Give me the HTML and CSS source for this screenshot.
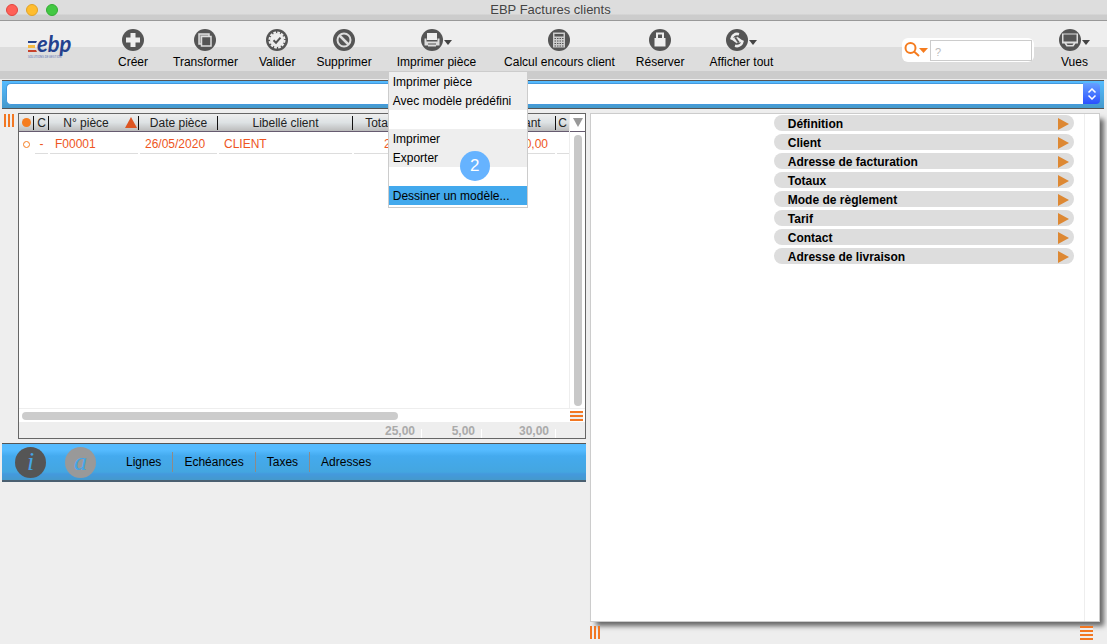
FILE: index.html
```html
<!DOCTYPE html>
<html lang="fr">
<head>
<meta charset="utf-8">
<title>EBP Factures clients</title>
<link rel="stylesheet" href="styles.css">
</head>
<body>
<header class="titlebar">
  <div class="lights"><span class="light red"></span><span class="light yellow"></span><span class="light green"></span></div>
  <h1 class="title">EBP Factures clients</h1>
</header>

<nav class="toolbar">
  <svg class="logo" width="48" height="26" viewBox="0 0 48 26" role="img" aria-label="ebp">
    <path d="M1 6h9l-1 2H1z" fill="#24418e"/>
    <path d="M1 10h7v3H1z" fill="#f5b942"/>
    <path d="M1 15h8l1 2H1z" fill="#c8412b"/>
    <text class="logo-name" x="10" y="17">ebp</text>
    <text class="logo-tag" x="1" y="23">SOLUTIONS DE GESTION</text>
  </svg>
  <div class="tools">
    <button class="tool"><span class="tool-icon"><svg width="22" height="22" viewBox="0 0 22 22"><circle cx="11" cy="11" r="11" fill="#555"/><path d="M8.500 4h5v4.500H18v5h-4.500V18h-5v-4.500H4v-5h4.500z" fill="#eee"/></svg></span>Créer</button>
    <button class="tool wide"><span class="tool-icon"><svg width="22" height="22" viewBox="0 0 22 22"><circle cx="11" cy="11" r="11" fill="#555"/><path d="M5 5h10v10H5z" fill="#999" stroke="#ddd" stroke-width="1.500"/><path d="M7.500 7.500h9.500v9.500H7.500z" fill="#555" stroke="#ddd" stroke-width="1.500"/></svg></span>Transformer</button>
    <button class="tool"><span class="tool-icon"><svg width="22" height="22" viewBox="0 0 22 22"><circle cx="11" cy="11" r="11" fill="#555"/><circle cx="11" cy="11" r="7" fill="#eee"/><circle cx="11" cy="11" r="7.500" fill="none" stroke="#eee" stroke-width="2" stroke-dasharray="2.700 1.230"/><path d="M7.500 11.300l2.500 2.400 4.500-5" fill="none" stroke="#555" stroke-width="2"/></svg></span>Valider</button>
    <button class="tool"><span class="tool-icon"><svg width="22" height="22" viewBox="0 0 22 22"><circle cx="11" cy="11" r="11" fill="#555"/><circle cx="11" cy="11" r="6.500" fill="none" stroke="#ddd" stroke-width="2"/><path d="M6.500 6.500l9 9" stroke="#ddd" stroke-width="2.500"/></svg></span>Supprimer</button>
    <div class="tool-with-menu">
      <button class="tool" aria-expanded="true"><span class="tool-icon"><svg width="22" height="22" viewBox="0 0 22 22"><circle cx="11" cy="11" r="11" fill="#555"/><path d="M6 4h10v7H6z" fill="#eee"/><path d="M3.500 9.500h2v3h11v-3h2v7h-3.500v-2H7v2H3.500z" fill="#ddd"/><path d="M7 15.500h8v2H7z" fill="#ddd"/></svg><span class="caret"></span></span>Imprimer pièce</button>
      <div class="menu" role="menu">
        <button class="menu-item" role="menuitem">Imprimer pièce</button>
        <button class="menu-item" role="menuitem">Avec modèle prédéfini</button>
        <div class="menu-gap"></div>
        <button class="menu-item" role="menuitem">Imprimer</button>
        <button class="menu-item" role="menuitem">Exporter</button>
        <div class="menu-gap"></div>
        <button class="menu-item selected" role="menuitem">Dessiner un modèle...</button>
        <span class="step">2</span>
      </div>
    </div>
    <button class="tool far"><span class="tool-icon"><svg width="22" height="22" viewBox="0 0 22 22"><circle cx="11" cy="11" r="11" fill="#555"/><path d="M5 3.500h12v15H5z" fill="#ccc"/><path d="M6.500 5h9v2.500h-9z" fill="#555"/><path d="M6.500 9.500h9M6.500 12h9M6.500 14.500h9M6.500 17h9" stroke="#555" stroke-width="1.200" stroke-dasharray="1.500 1"/></svg></span>Calcul encours client</button>
    <button class="tool"><span class="tool-icon"><svg width="22" height="22" viewBox="0 0 22 22"><circle cx="11" cy="11" r="11" fill="#555"/><path d="M5.500 9h11v8.500h-11z" fill="#eee"/><path d="M8 10V4.500h6V10" fill="none" stroke="#eee" stroke-width="2"/></svg></span>Réserver</button>
    <button class="tool wide"><span class="tool-icon"><svg width="22" height="22" viewBox="0 0 22 22"><circle cx="11" cy="11" r="11" fill="#555"/><path d="M13 5.200C9 4 5.500 6.500 5.700 10.500" fill="none" stroke="#eee" stroke-width="2.500"/><path d="M4 9.500l6.500-1.500.5 6.500z" fill="#eee"/><path d="M9 16.800c4 1.200 7.500-1.300 7.300-5.300" fill="none" stroke="#eee" stroke-width="2.500"/><path d="M18 12.500l-6.500 1.500-.5-6.500z" fill="#eee"/><path d="M9 8.500l4 5" stroke="#555" stroke-width="1.500"/></svg><span class="caret"></span></span>Afficher tout</button>
  </div>
  <div class="search">
    <svg width="24" height="16" viewBox="0 0 24 16"><circle cx="6.500" cy="6" r="5" fill="none" stroke="#f57c1f" stroke-width="2"/><path d="M10 9.500l5 4.500" stroke="#f57c1f" stroke-width="2"/><path d="M15 6h9l-4.500 5z" fill="#f57c1f"/></svg>
    <input class="search-input" type="text" placeholder="?" aria-label="Rechercher">
  </div>
  <button class="tool"><span class="tool-icon"><svg width="22" height="22" viewBox="0 0 22 22"><circle cx="11" cy="11" r="11" fill="#555"/><path d="M3 4.500h16v10h-2.500l-2 3h-7l-2-3H3z" fill="#ddd"/><path d="M4.500 5.500h13v7h-13z" fill="#555"/><path d="M7.500 14.500h7l-1 1.500h-5z" fill="#555"/></svg><span class="caret"></span></span>Vues</button>
</nav>

<div class="filterbar">
  <select class="filter" aria-label="Filtre"><option></option></select>
  <span class="stepper"><svg width="10" height="12" viewBox="0 0 10 12"><path d="M1.500 4.500L5 1l3.500 3.500M1.500 7.500L5 11l3.500-3.500" fill="none" stroke="#fff" stroke-width="1.500"/></svg></span>
</div>

<main class="content">
  <div class="left">
    <div class="list-row">
      <span class="bars"></span>
      <section class="list">
        <div class="list-body">
          <table class="grid">
            <colgroup><col class="c-dot"><col class="c-c"><col class="c-num"><col class="c-date"><col class="c-client"><col class="c-total"><col class="c-tax"><col class="c-amount"><col class="c-end"></colgroup>
            <thead><tr>
              <th><span class="dot"></span></th><th>C</th><th class="sorted">N° pièce<span class="sort"></span></th><th>Date pièce</th><th>Libellé client</th><th>Total HT</th><th>TVA</th><th>Montant</th><th>C</th>
            </tr></thead>
            <tbody><tr>
              <td class="mark"><span class="ring"></span></td><td class="dash"><div>-</div></td><td><div>F00001</div></td><td><div>26/05/2020</div></td><td><div>CLIENT</div></td><td class="num"><div>25,00</div></td><td class="num"><div>5,00</div></td><td class="num"><div>30,00</div></td><td><div>&nbsp;</div></td>
            </tr></tbody>
          </table>
          <div class="vscroll"><div class="vhead"><span class="down"></span></div><div class="vthumb"></div></div>
        </div>
        <div class="hscroll"><span class="hthumb"></span><span class="lines"></span></div>
        <div class="totals"><span class="sum first">25,00</span><span class="sum second">5,00</span><span class="sum third">30,00</span></div>
      </section>
    </div>
    <nav class="tabs">
      <button class="round" aria-label="Informations">i</button>
      <button class="round light-round" aria-label="Annotations">a</button>
      <div class="tab-list"><button class="tab">Lignes</button><button class="tab">Echéances</button><button class="tab">Taxes</button><button class="tab">Adresses</button></div>
    </nav>
  </div>
  <div class="right">
    <section class="panel">
      <div class="sections">
        <button class="section">Définition<span class="play"></span></button>
        <button class="section">Client<span class="play"></span></button>
        <button class="section">Adresse de facturation<span class="play"></span></button>
        <button class="section">Totaux<span class="play"></span></button>
        <button class="section">Mode de règlement<span class="play"></span></button>
        <button class="section">Tarif<span class="play"></span></button>
        <button class="section">Contact<span class="play"></span></button>
        <button class="section">Adresse de livraison<span class="play"></span></button>
      </div>
    </section>
    <footer class="foot"><span class="bars"></span><span class="lines"></span></footer>
  </div>
</main>
</body>
</html>
```
FILE: styles.css
```css
* { box-sizing: border-box; }
body { margin: 0; min-height: 100vh; display: flex; flex-direction: column; background: #eee; color: #000; font: 12px/14px "Liberation Sans", Arial, sans-serif; }
button { border: 0; padding: 0; margin: 0; background: none; font: inherit; color: inherit; }

.titlebar { position: relative; height: 21px; display: flex; align-items: center; justify-content: center; background: linear-gradient(#ddd 14px, #ccc 15px); border-bottom: 1px solid #999; }
.lights { position: absolute; left: 6px; top: 4px; display: flex; gap: 8px; }
.light { width: 12px; height: 12px; border-radius: 50%; border: 1px solid; }
.red { background: #ff6057; border-color: #e2463f; }
.yellow { background: #ffbd2e; border-color: #e1a325; }
.green { background: #43c843; border-color: #34ad34; }
.title { margin: 0; padding-right: 6px; font: 13px/20px "Liberation Sans", sans-serif; color: #444; }

.toolbar { height: 58px; display: flex; align-items: flex-start; padding: 8px 17px 0 27px; background: linear-gradient(#eee 26px, #ddd 26px, #ddd 50px, #ccc 50px); }
.logo { margin: 6px 43px 0 0; flex: none; overflow: visible; }
.logo-name { font: italic bold 22px Lato, sans-serif; fill: #24418e; }
.logo-tag { font: 3px Roboto, sans-serif; fill: #5d76b5; }
.tools { display: flex; gap: 21px; }
.tool { display: flex; flex-direction: column; align-items: center; gap: 4px; white-space: nowrap; }
.tool.wide { margin-left: 4px; }
.tool.far { margin-left: 7px; }
.tool-icon { display: flex; align-items: center; gap: 1px; }
.tool-icon svg { display: block; }
.caret { border: 4px solid transparent; border-top: 5px solid #444; border-bottom: 0; margin-top: 4px; }
.tool-with-menu { position: relative; margin-left: 4px; }
.menu { position: absolute; z-index: 5; left: -9px; top: 42px; width: 140px; background: #fff; border: 1px solid #ccc; padding-bottom: 2px; }
.menu-item { display: block; width: 100%; height: 19px; padding: 0 4px; text-align: left; background: #eee; white-space: nowrap; }
.menu-item.selected { background: #42a9ed; }
.menu-gap { height: 19px; }
.step { position: absolute; left: 71px; top: 79px; width: 30px; height: 30px; border-radius: 50%; background: #66b3ff; color: #fff; font: 17px/30px "Liberation Sans", sans-serif; text-align: center; }
.search { margin: 9px 25px 0 auto; height: 24px; display: flex; align-items: center; gap: 2px; padding: 0 2px; background: #fff; border-radius: 6px; }
.search-input { width: 102px; height: 21px; border: 1px solid #ccc; padding: 4px 4px 0; background: #fff; font: 11px/14px "Liberation Sans", sans-serif; }
.search-input::placeholder { color: #bbb; }

.filterbar { height: 29px; margin: 1px 3px 0 2px; display: flex; padding: 2px 4px; background: linear-gradient(#55bbff, #4499cc); border-top: 1px solid #555; border-bottom: 1px solid #555; }
.filter { flex: 1; height: 22px; appearance: none; border: 1px solid #4499dd; border-right: 0; border-radius: 5px 0 0 5px; background: #fff; }
.stepper { width: 17px; height: 21px; display: flex; align-items: center; justify-content: center; background: linear-gradient(#66a0ff, #2a50ff); border-radius: 0 4px 4px 0; }

.content { flex: 1; display: flex; gap: 4px; padding: 4px 7px 4px 2px; }
.left { flex: 584 1 0; min-width: 0; }
.right { flex: 510 1 0; min-width: 0; display: flex; flex-direction: column; }
.list-row { display: flex; align-items: flex-start; gap: 4px; }
.bars { flex: none; width: 10px; height: 13px; margin-left: 2px; margin-top: 1px; background: repeating-linear-gradient(90deg, #f27722 0 2px, transparent 2px 4px); }
.list { flex: 1; min-width: 0; border: 1px solid #666; }
.list-body { display: flex; height: 295px; background: #fff; border-bottom: 1px solid #eee; }
.grid { flex: 1; width: 100%; min-width: 0; table-layout: fixed; border-collapse: separate; border-spacing: 0; height: 42px; }
.c-dot { width: 15px; } .c-c { width: 15px; } .c-num { width: 90px; } .c-date { width: 79px; } .c-total { width: 69px; } .c-tax { width: 60px; } .c-amount { width: 74px; } .c-end { width: 13px; }
th { height: 18px; padding: 0 2px; font-weight: 400; color: #222; background: linear-gradient(#111, #111) right center / 1px 14px no-repeat, linear-gradient(#eee, #dde2e4 50%, #bbb); border-bottom: 1px solid #665b70; white-space: nowrap; }
th:last-child { background: linear-gradient(#eee, #dde2e4 50%, #bbb); }
.sorted { position: relative; padding-right: 18px; }
.sort { position: absolute; right: 2px; top: 3px; border: 6px solid transparent; border-bottom: 11px solid #dd5522; border-top: 0; }
.dot { display: block; width: 9px; height: 9px; border-radius: 50%; background: #f57c1f; margin: 0 0 1px 1px; }
td { height: 22px; padding: 0 1px; color: #ee5522; vertical-align: top; }
td div { height: 22px; line-height: 24px; padding: 0 7px 0 5px; border-bottom: 1px solid #ddd; }
.dash div { padding: 0; text-align: center; }
.mark { vertical-align: middle; }
.ring { display: block; width: 7px; height: 7px; margin-left: 3px; border: 1px solid #f57c1f; border-radius: 50%; }
.num { text-align: right; }
.vscroll { width: 16px; flex: none; display: flex; flex-direction: column; align-items: center; border-left: 1px solid #eee; padding-bottom: 2px; }
.vhead { width: 100%; height: 18px; display: flex; align-items: center; justify-content: center; border-bottom: 1px solid #665b70; }
.down { border: 5px solid transparent; border-top: 9px solid #999; border-bottom: 0; }
.vthumb { flex: 1; width: 8px; margin-top: 3px; border-radius: 4px; background: #c8c8c8; }
.hscroll { height: 13px; display: flex; align-items: center; justify-content: space-between; background: #fff; padding: 0 2px 0 3px; }
.hthumb { width: 67%; height: 8px; border-radius: 4px; background: #ccc; }
.lines { width: 13px; height: 10px; background: repeating-linear-gradient(#f27722 0 2px, #eee 2px 4px); }
.totals { height: 16px; display: flex; justify-content: flex-end; padding-right: 29px; color: #aaa; font-weight: 700; line-height: 19px; }
.sum { padding-right: 7px; text-align: right; background: linear-gradient(#fff, #fff) right bottom / 1px 9px no-repeat; }
.first { width: 69px; } .second { width: 60px; } .third { width: 74px; }

.tabs { height: 39px; margin-top: 4px; display: flex; align-items: center; padding-left: 13px; background: linear-gradient(#55bbff 6px, #44aaee 12px, #44a6e0 28px, #4499dd 30px, #4499cc); border-top: 1px solid #555; border-bottom: 2px solid #4a5f70; }
.round { width: 31px; height: 31px; border-radius: 50%; background: #555; color: #45a5e5; font: italic 26px/28px "Liberation Serif", serif; text-align: center; }
.light-round { margin-left: 19px; background: #999; }
.tab-list { display: flex; margin-left: 19px; }
.tab { height: 20px; padding: 0 11px; border-left: 1px solid #8f8a86; }
.tab:first-child { border-left: 0; }

.panel { flex: 1; display: flex; justify-content: flex-end; background: #fff; border: 1px solid #ccc; box-shadow: 5px 5px 5px -1px #666; padding: 0 14px 0 0; }
.sections { width: 63%; padding: 1px 10px 0 0; display: flex; flex-direction: column; gap: 3px; border-right: 1px solid #eee; }
.section { width: 100%; height: 16px; display: flex; align-items: center; justify-content: space-between; padding: 1px 5px 0 14px; border-radius: 8px; background: #ddd; font-weight: 700; text-align: left; }
.play { border: 6px solid transparent; border-left: 11px solid #dd8833; border-right: 0; }
.foot { display: flex; justify-content: space-between; padding: 4px 7px 0 0; }
.foot .bars { margin: 0; }
.foot .lines { height: 14px; }
```
